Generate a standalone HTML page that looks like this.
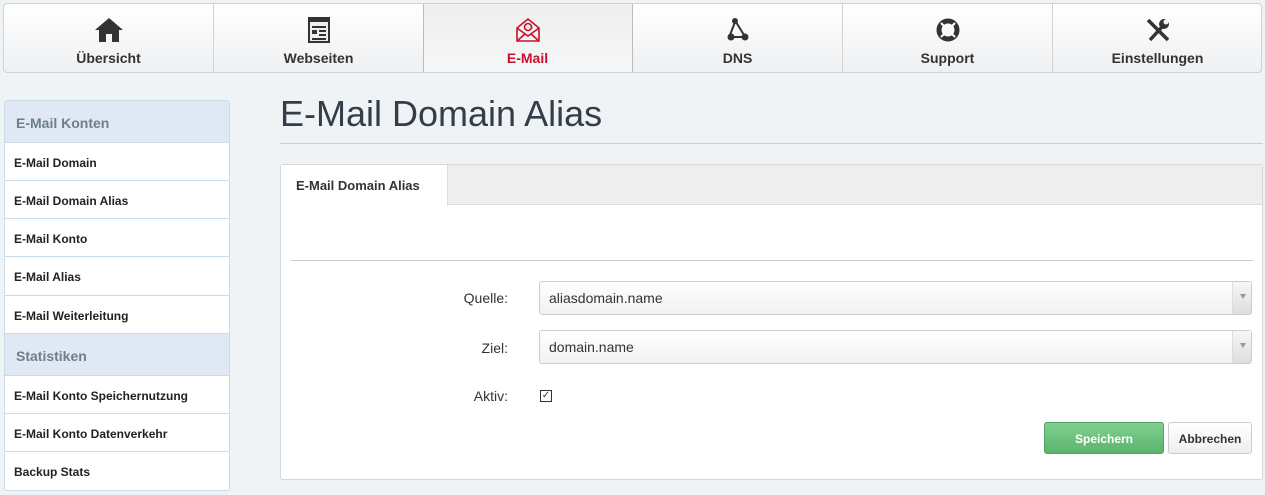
<!DOCTYPE html>
<html><head><meta charset="utf-8"><style>
*{box-sizing:border-box;margin:0;padding:0}
body{width:1265px;height:495px;background:#f0f3f6;font-family:"Liberation Sans",Arial,sans-serif;position:relative;overflow:hidden;color:#333}
.nav{position:absolute;left:3px;top:3px;width:1259px;height:70px;border:1px solid #cfd2d5;border-radius:4px;background:linear-gradient(#fff,#eef0f2);overflow:hidden}
.nav div{position:absolute;top:0;height:68px;width:210px;border-right:1px solid #d3d3d3;text-align:center;font-weight:bold;font-size:14px;color:#333}
.nav div:last-child{border-right:none}
.nav div.act{background:linear-gradient(#eee,#f6f7f8);color:#c8102e;box-shadow:inset 1px 0 0 #bbb;border-right:1px solid #bbb}
.nav svg{position:absolute;left:50%;top:13px;transform:translateX(-50%)}
.nav span{position:absolute;left:0;right:0;top:46px}
.side{position:absolute;left:4px;top:100px;width:226px;border:1px solid #c9dcec;border-radius:3px;background:#fff}
.side .h{height:42px;background:#dfe8f3;font-weight:bold;font-size:14px;color:#6f7e8e;padding:14px 0 0 11px;border-bottom:1px solid #c9dcec}
.side .i{height:38px;font-size:12px;font-weight:bold;color:#222;padding:13px 0 0 9px;border-bottom:1px solid #c9dcec}
.side .i:last-child{border-bottom:none}
h1{position:absolute;left:280px;top:93px;font-weight:normal;font-size:36px;color:#333e48}
.uline{position:absolute;left:280px;top:143px;width:983px;height:1px;background:#ccc}
.panel{position:absolute;left:280px;top:164px;width:983px;height:316px;border:1px solid #d7d7d7;border-radius:3px;background:#fff}
.tabbar{height:40px;background:#eee;border-bottom:1px solid #ddd}
.tab{position:absolute;left:0;top:0;width:167px;height:41px;background:#fff;border-right:1px solid #ddd;font-weight:bold;font-size:13px;padding:13px 0 0 15px;color:#333}
.hr{position:absolute;left:10px;top:95px;width:962px;height:1px;background:#ccc}
.lbl{position:absolute;right:754px;font-size:14px;color:#333}
.sel{position:absolute;left:258px;width:713px;height:34px;border:1px solid #ccc;border-radius:3px;background:linear-gradient(#fff,#f1f1f1);font-size:14px;padding:8px 0 0 9px}
.sel::after{content:"";position:absolute;right:0;top:0;width:18px;height:32px;border-left:1px solid #ddd;background:linear-gradient(#f7f7f7,#ddd)}
.sel b{position:absolute;right:5px;top:12px;width:0;height:0;border-left:3px solid transparent;border-right:3px solid transparent;border-top:5px solid #999;z-index:1}
.cb{position:absolute;left:259px;top:225px;width:12px;height:12px;border:1px solid #333;font-size:10px;line-height:10px;text-align:center}
.btn{position:absolute;top:257px;height:32px;border-radius:3px;font-size:12px;font-weight:bold;text-align:center;padding-top:9px}
</style></head><body>
<div class="nav">
 <div style="left:0"><svg width="30" height="26" viewBox="0 0 30 26"><path d="M15 1L1 13h4v12h7v-8h6v8h7V13h4z" fill="#333"/></svg><span>Übersicht</span></div>
 <div style="left:210px"><svg width="22" height="26" viewBox="0 0 22 26"><rect x="1" y="1" width="20" height="24" fill="#eee" stroke="#333" stroke-width="2"/><rect x="1" y="1" width="20" height="4" fill="#333"/><rect x="4" y="9" width="14" height="2" fill="#333"/><rect x="4" y="13" width="5" height="4" fill="#333"/><rect x="11" y="13" width="7" height="2" fill="#333"/><rect x="11" y="17" width="7" height="2" fill="#333"/><rect x="4" y="21" width="14" height="2" fill="#333"/></svg><span>Webseiten</span></div>
 <div class="act" style="left:419px"><svg width="26" height="26" viewBox="0 0 26 26" fill="none" stroke="#c8102e" stroke-width="1.6"><path d="M2 11L13 2l11 9v13H2z"/><path d="M2 11l11 8 11-8M2 24l8-7M24 24l-8-7"/><circle cx="13" cy="10" r="3.5"/><path d="M16.5 10v2"/></svg><span>E-Mail</span></div>
 <div style="left:629px"><svg width="24" height="26" viewBox="0 0 24 26"><path d="M9 5L4 18M10 5l8 13M5 20h14" stroke="#333" stroke-width="2"/><circle cx="9" cy="4" r="3" fill="#333"/><circle cx="5" cy="20" r="3.5" fill="#333"/><circle cx="19" cy="20" r="3.5" fill="#333"/></svg><span>DNS</span></div>
 <div style="left:839px"><svg width="26" height="26" viewBox="0 0 26 26"><circle cx="13" cy="13" r="9" fill="none" stroke="#333" stroke-width="5"/><path d="M6 6l4 4M20 6l-4 4M6 20l4-4M20 20l-4-4" stroke="#fff" stroke-width="2"/></svg><span>Support</span></div>
 <div style="left:1049px;width:209px"><svg width="26" height="26" viewBox="0 0 26 26"><path d="M3 3l20 20" stroke="#333" stroke-width="3.5"/><path d="M5 23L17 10" stroke="#333" stroke-width="3.5"/><circle cx="19" cy="7" r="5" fill="#333"/><circle cx="21" cy="5" r="2.5" fill="#f3f4f5"/></svg><span>Einstellungen</span></div>
</div>
<div class="side">
 <div class="h">E-Mail Konten</div>
 <div class="i">E-Mail Domain</div>
 <div class="i">E-Mail Domain Alias</div>
 <div class="i">E-Mail Konto</div>
 <div class="i" style="height:39px">E-Mail Alias</div>
 <div class="i">E-Mail Weiterleitung</div>
 <div class="h">Statistiken</div>
 <div class="i">E-Mail Konto Speichernutzung</div>
 <div class="i">E-Mail Konto Datenverkehr</div>
 <div class="i">Backup Stats</div>
</div>
<h1>E-Mail Domain Alias</h1>
<div class="uline"></div>
<div class="panel">
 <div class="tabbar"></div><div class="tab">E-Mail Domain Alias</div>
 <div class="hr"></div>
 <div class="lbl" style="top:125px">Quelle:</div>
 <div class="sel" style="top:116px">aliasdomain.name<b></b></div>
 <div class="lbl" style="top:175px">Ziel:</div>
 <div class="sel" style="top:165px">domain.name<b></b></div>
 <div class="lbl" style="top:223px">Aktiv:</div>
 <div class="cb">✓</div>
 <div class="btn" style="left:763px;width:120px;background:linear-gradient(#7fcf8f,#5cb56d);border:1px solid #4fa45f;color:#fff">Speichern</div>
 <div class="btn" style="left:887px;width:84px;background:linear-gradient(#fff,#eee);border:1px solid #ccc;color:#333">Abbrechen</div>
</div>
</body></html>
